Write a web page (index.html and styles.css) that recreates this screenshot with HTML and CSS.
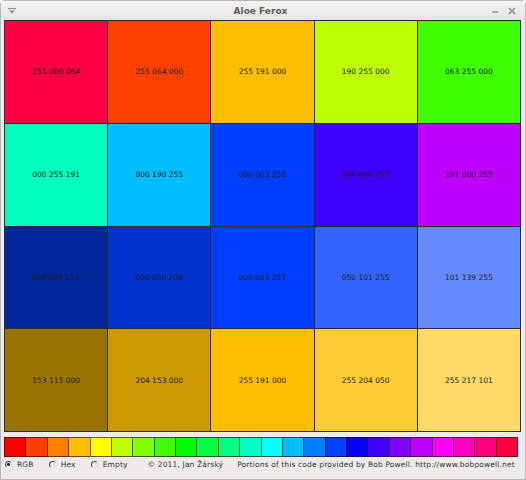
FILE: index.html
```html
<!DOCTYPE html>
<html lang="en">
<head>
    <meta charset="UTF-8">
    <title>Aloe Ferox</title>
    <link rel="stylesheet" href="styles.css">
</head>
<body>
    <div class="window">
        <div class="titlebar">
            <svg class="menu-icon" width="10" height="8" viewBox="0 0 10 8">
                <path d="M1 1.5h8" stroke="#8a8a8a" stroke-width="1.2"/>
                <path d="M2 3.5l3 3 3-3z" fill="#8a8a8a"/>
            </svg>
            <div class="title">Aloe Ferox</div>
            <div class="win-buttons">
                <svg width="10" height="10" viewBox="0 0 10 10"><path d="M2 6h6" stroke="#8a8a8a" stroke-width="1.4"/></svg>
                <svg width="10" height="10" viewBox="0 0 10 10"><path d="M2 2l6 6M8 2l-6 6" stroke="#8a8a8a" stroke-width="1.4"/></svg>
            </div>
        </div>

        <div class="grid" id="grid"></div>

        <div class="palette" id="palette"></div>

        <div class="status">
            <label class="radio"><span class="dot checked"></span>RGB</label>
            <label class="radio"><span class="dot"></span>Hex</label>
            <label class="radio"><span class="dot"></span>Empty</label>
            <span class="copy">© 2011, Jan Žárský</span>
            <span class="credit">Portions of this code provided by Bob Powell. http://www.bobpowell.net</span>
        </div>
    </div>

    <script>
        // scheme colours, row by row
        const colors = [
            [255, 0, 64], [255, 64, 0], [255, 191, 0], [190, 255, 0], [63, 255, 0],
            [0, 255, 191], [0, 190, 255], [0, 63, 255], [64, 0, 255], [191, 0, 255],
            [0, 38, 153], [0, 50, 204], [0, 63, 255], [50, 101, 255], [101, 139, 255],
            [153, 115, 0], [204, 153, 0], [255, 191, 0], [255, 204, 50], [255, 217, 101]
        ];

        const pad = n => String(n).padStart(3, "0");
        const grid = document.getElementById("grid");

        colors.forEach(c => {
            const cell = document.createElement("div");
            cell.className = "cell";
            cell.style.background = `rgb(${c[0]}, ${c[1]}, ${c[2]})`;
            cell.textContent = c.map(pad).join(" ");
            grid.appendChild(cell);
        });

        const palette = document.getElementById("palette");
        for (let i = 0; i < 24; i++) {
            const sw = document.createElement("div");
            sw.className = "swatch";
            sw.style.background = `hsl(${i * 15}, 100%, 50%)`;
            palette.appendChild(sw);
        }
    </script>
</body>
</html>
```

FILE: styles.css
```css
body {
    margin: 0;
    background: #ffffff;
    font-family: "DejaVu Sans", sans-serif;
}

.window {
    width: 526px;
    height: 480px;
    box-sizing: border-box;
    background: #edeceb;
    border: 1px solid #b8b8b8;
    border-radius: 4px 4px 0 0;
    display: flex;
    flex-direction: column;
}

.titlebar {
    height: 19px;
    display: flex;
    align-items: center;
    justify-content: space-between;
    padding: 0 8px 0 6px;
    background: linear-gradient(to bottom, #f4f4f3, #e6e5e4);
}

.title {
    font-size: 9px;
    font-weight: bold;
    color: #606060;
    margin-left: 14px;
}

.win-buttons {
    display: flex;
    gap: 7px;
}

.grid {
    margin: 0 3px 0 3px;
    width: 517px;
    height: 412px;
    box-sizing: border-box;
    padding: 1px;
    background: #2a2a2a;
    display: grid;
    grid-template-columns: repeat(5, 1fr);
    grid-template-rows: repeat(4, 1fr);
    gap: 1px;
}

.cell {
    display: flex;
    align-items: center;
    justify-content: center;
    font-size: 7.5px;
    color: #1c1c1c;
}

.palette {
    margin: 5px 0 0 3px;
    width: 513px;
    height: 20px;
    display: flex;
}

.swatch {
    flex: 1;
    border: 1px solid rgba(40, 0, 0, 0.65);
    margin-right: -1px;
}

.status {
    display: flex;
    align-items: center;
    height: 15px;
    padding-left: 4px;
    font-size: 7.5px;
    letter-spacing: 0.15px;
    color: #333;
}

.radio {
    display: flex;
    align-items: center;
    gap: 5px;
    margin-right: 15px;
}

.radio:nth-child(3) {
    margin-right: 20px;
}

.dot {
    width: 5px;
    height: 5px;
    border-radius: 50%;
    border: 1px solid #555;
    border-color: #444 #e4e4e4 #e4e4e4 #444;
    background: transparent;
}

.dot.checked {
    background: radial-gradient(circle, #333 0 1.2px, transparent 1.8px);
}

.copy {
    margin-right: 14px;
}
```
